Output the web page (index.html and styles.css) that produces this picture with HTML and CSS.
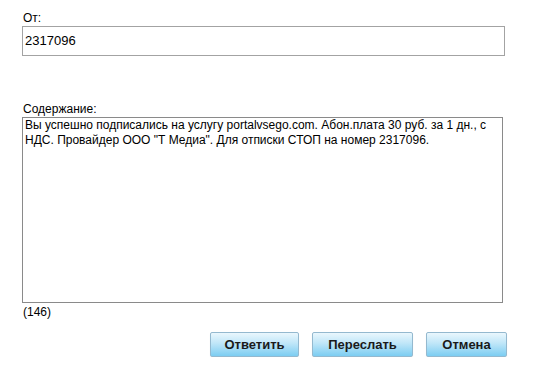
FILE: index.html
```html
<!DOCTYPE html>
<html lang="ru">
<head>
    <meta charset="UTF-8">
    <title>Сообщение</title>
    <link rel="stylesheet" href="styles.css">
</head>
<body>
    <div class="message">
        <div class="field">
            <label for="from">От:</label>
            <input type="text" id="from" class="from-input" value="2317096">
        </div>
        <div class="field field-body">
            <label for="body">Содержание:</label>
            <textarea id="body" class="body-input">Вы успешно подписались на услугу portalvsego.com. Абон.плата 30 руб. за 1 дн., с НДС. Провайдер ООО "Т Медиа". Для отписки СТОП на номер 2317096.</textarea>
            <div class="counter">(146)</div>
        </div>
        <div class="actions">
            <button class="btn btn-reply">Ответить</button>
            <button class="btn btn-forward">Переслать</button>
            <button class="btn btn-cancel">Отмена</button>
        </div>
    </div>
</body>
</html>
```

FILE: styles.css
```css
* {
    margin: 0;
    padding: 0;
    box-sizing: border-box;
}

body {
    background: #fff;
    font-family: "Liberation Sans", Arial, sans-serif;
    font-size: 12px;
    color: #000;
}

.message {
    width: 534px;
    padding: 10px 0 0 22px;
}

.field label {
    display: block;
    height: 16px;
    line-height: 16px;
    padding-left: 1px;
}

.from-input {
    display: block;
    width: 483px;
    height: 30px;
    border: 1px solid #a3a3a3;
    padding: 0 2px 2px;
    font-family: inherit;
    font-size: 13px;
    color: #000;
    outline: none;
}

.field-body {
    margin-top: 46px;
}

.field-body label {
    height: 15px;
    line-height: 15px;
}

.body-input {
    display: block;
    width: 481px;
    height: 186px;
    border: 1px solid #8a8a8a;
    padding: 0 2px;
    font-family: inherit;
    font-size: 12px;
    line-height: 15px;
    color: #000;
    resize: none;
    outline: none;
}

.counter {
    height: 15px;
    line-height: 15px;
    margin-top: 2px;
    padding-left: 1px;
}

.actions {
    display: flex;
    gap: 13px;
    margin-top: 12px;
    padding-left: 188px;
}

.btn {
    height: 25px;
    border: 1px solid #94b9cf;
    border-radius: 2px;
    background: linear-gradient(#eaf7fd 0%, #bfe6f8 45%, #7ccdf2 100%);
    box-shadow: 0 1px 1px rgba(0, 0, 0, 0.08);
    font-family: inherit;
    font-size: 13px;
    font-weight: bold;
    color: #1a1a1a;
    cursor: pointer;
}

.btn-reply {
    width: 89px;
}

.btn-forward {
    width: 101px;
}

.btn-cancel {
    width: 81px;
}
```
